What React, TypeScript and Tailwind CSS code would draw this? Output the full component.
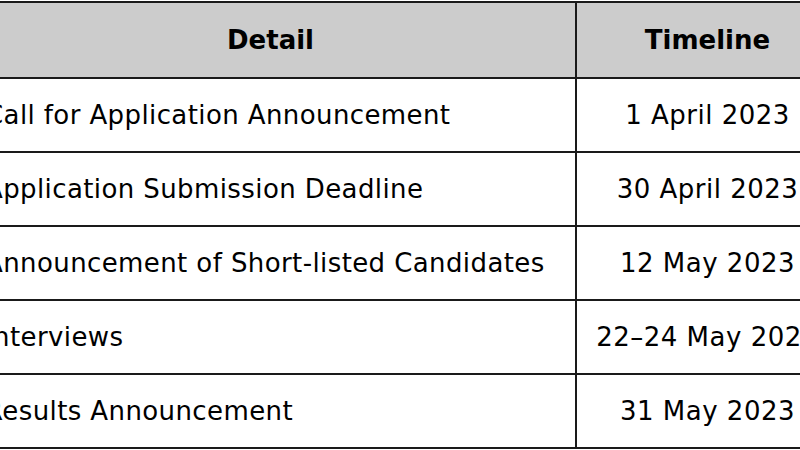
const rows = [
  { detail: "Call for Application Announcement", when: "1 April 2023" },
  { detail: "Application Submission Deadline", when: "30 April 2023" },
  { detail: "Announcement of Short-listed Candidates", when: "12 May 2023" },
  { detail: "Interviews", when: "22–24 May 2023" },
  { detail: "Results Announcement", when: "31 May 2023" },
];

export default function App() {
  return (
    <div className="w-[800px] h-[450px] overflow-hidden bg-white">
      <table
        className="ml-[-36px] mt-[1px] w-[876px] border-collapse text-[26px] text-black"
        style={{ fontFamily: '"DejaVu Sans", Verdana, sans-serif' }}
      >
        <thead>
          <tr className="h-[76px] bg-[#cccccc]">
            <th className="w-[611px] border-2 border-[#1a1a1a] font-bold text-center">Detail</th>
            <th className="border-2 border-[#1a1a1a] font-bold text-center">Timeline</th>
          </tr>
        </thead>
        <tbody>
          {rows.map((r) => (
            <tr key={r.detail} className="h-[74px]">
              <td className="border-2 border-[#1a1a1a] pl-[19px] text-left whitespace-nowrap tracking-[0.4px]">
                {r.detail}
              </td>
              <td className="border-2 border-[#1a1a1a] text-center whitespace-nowrap tracking-[0.5px]">
                {r.when}
              </td>
            </tr>
          ))}
        </tbody>
      </table>
    </div>
  );
}
